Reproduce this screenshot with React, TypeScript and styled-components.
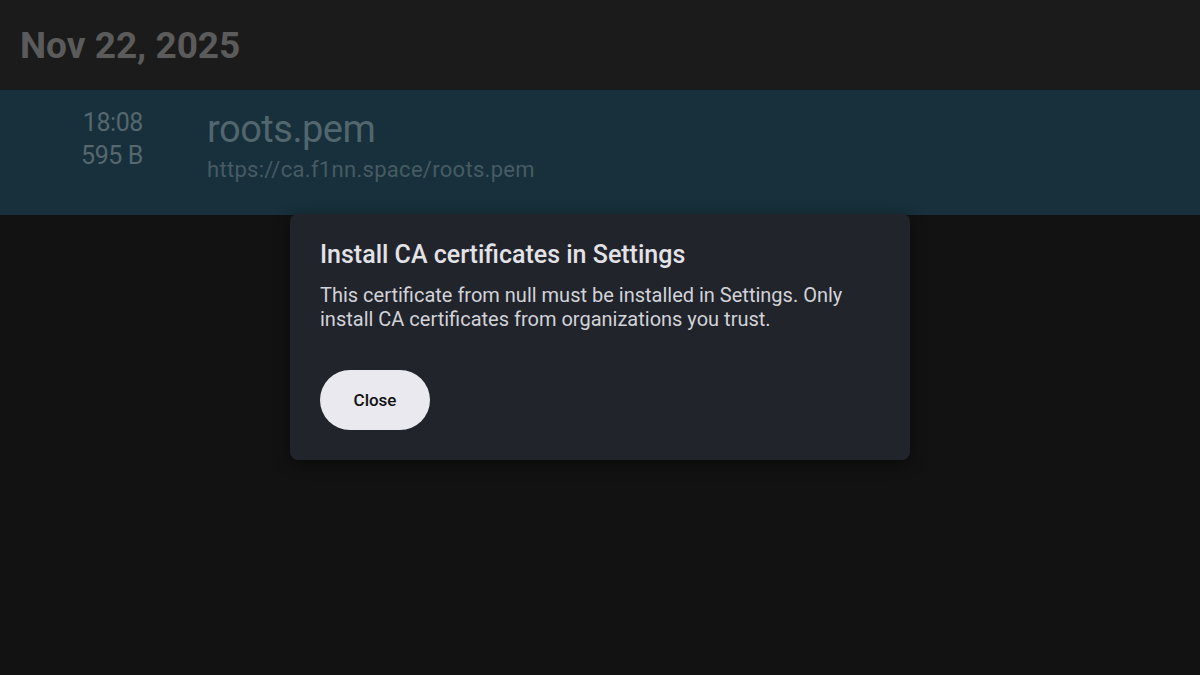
import React from 'react';
import styled, { createGlobalStyle } from 'styled-components';

const GlobalStyle = createGlobalStyle`
  html, body {
    margin: 0;
    padding: 0;
    background: #121212;
  }
  body {
    font-family: Roboto, "Noto Sans", "Liberation Sans", sans-serif;
  }
`;

const Screen = styled.div`
  position: relative;
  width: 1200px;
  height: 675px;
  overflow: hidden;
  background: #121212;
  display: flex;
  flex-direction: column;
`;

const DateHeader = styled.div`
  height: 89px;
  box-sizing: border-box;
  background: #1b1b1b;
  padding: 24px 0 0 20px;
  color: #5b5b5b;
  font-size: 37px;
  font-weight: 700;
  line-height: 44px;
`;

const DownloadRow = styled.div`
  height: 126px;
  box-sizing: border-box;
  background: #17303b;
  border-top: 1px solid #0f1e24;
  display: flex;
  align-items: flex-start;
  padding-top: 16px;
`;

const Meta = styled.div`
  width: 143px;
  text-align: right;
  color: #56676e;
  font-size: 25px;
  letter-spacing: -0.4px;
  line-height: 33px;
`;

const Info = styled.div`
  margin-left: 64px;
  display: flex;
  flex-direction: column;
`;

const FileName = styled.div`
  color: #52666e;
  font-size: 38px;
  letter-spacing: -0.5px;
  line-height: 44px;
  margin-top: 1px;
`;

const FileUrl = styled.div`
  color: #475b63;
  font-size: 22px;
  letter-spacing: 0.3px;
  line-height: 26px;
  margin-top: 6px;
`;

const Dialog = styled.div`
  position: absolute;
  left: 290px;
  top: 214px;
  width: 620px;
  height: 246px;
  box-sizing: border-box;
  background: #21242b;
  border-radius: 8px;
  box-shadow: 0 4px 16px rgba(0, 0, 0, 0.45);
  padding: 26px 30px;
  display: flex;
  flex-direction: column;
  align-items: flex-start;
`;

const DialogTitle = styled.div`
  color: #e2e2e7;
  font-size: 25px;
  font-weight: 500;
  line-height: 30px;
`;

const DialogBody = styled.div`
  margin-top: 13px;
  color: #d2d3d9;
  font-size: 20px;
  line-height: 24px;
`;

const CloseButton = styled.button`
  margin-top: 39px;
  width: 110px;
  height: 60px;
  border: none;
  border-radius: 30px;
  background: #e9e9ef;
  color: #111;
  font-family: Roboto, "Noto Sans", "Liberation Sans", sans-serif;
  font-size: 17px;
  font-weight: 500;
  cursor: pointer;
`;

export default function App() {
  return (
    <Screen>
      <GlobalStyle />
      <DateHeader>Nov 22, 2025</DateHeader>
      <DownloadRow>
        <Meta>
          <div>18:08</div>
          <div>595 B</div>
        </Meta>
        <Info>
          <FileName>roots.pem</FileName>
          <FileUrl>https://ca.f1nn.space/roots.pem</FileUrl>
        </Info>
      </DownloadRow>
      <Dialog>
        <DialogTitle>Install CA certificates in Settings</DialogTitle>
        <DialogBody>
          This certificate from null must be installed in Settings. Only
          <br />
          install CA certificates from organizations you trust.
        </DialogBody>
        <CloseButton>Close</CloseButton>
      </Dialog>
    </Screen>
  );
}
